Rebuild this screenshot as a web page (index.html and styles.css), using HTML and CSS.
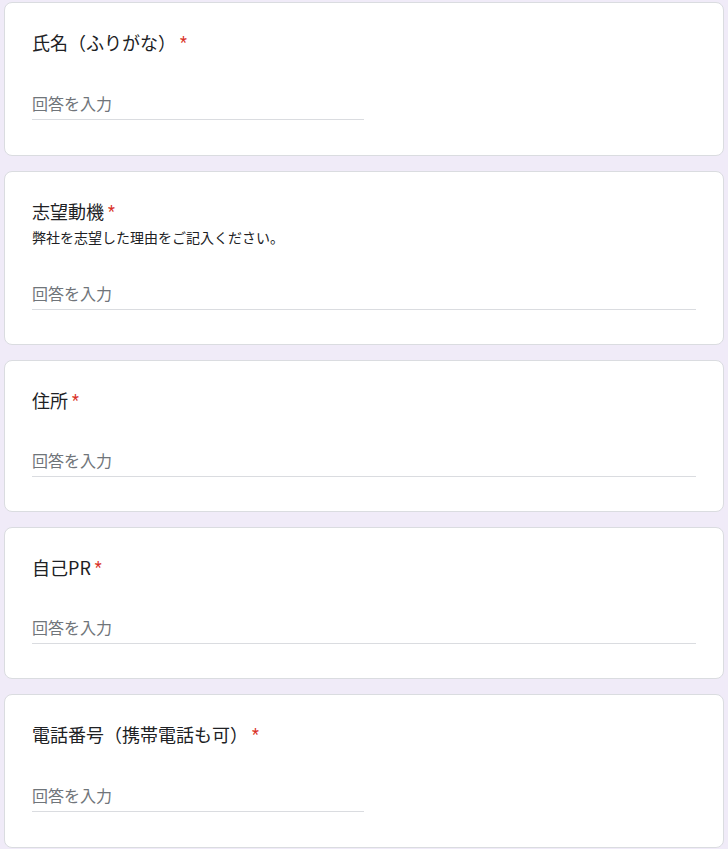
FILE: index.html
```html
<!DOCTYPE html>
<html lang="ja">
<head>
<meta charset="utf-8">
<title>フォーム</title>
<link rel="stylesheet" href="styles.css">
</head>
<body>
<main class="form">
  <section class="card">
    <div class="q-title q-title--paren">氏名（ふりがな） <span class="req">*</span></div>
    <div class="answer answer--short">回答を入力</div>
  </section>
  <section class="card">
    <div class="q-title">志望動機 <span class="req">*</span></div>
    <div class="q-desc">弊社を志望した理由をご記入ください。</div>
    <div class="answer answer--after-desc">回答を入力</div>
  </section>
  <section class="card">
    <div class="q-title">住所 <span class="req">*</span></div>
    <div class="answer">回答を入力</div>
  </section>
  <section class="card">
    <div class="q-title">自己PR <span class="req">*</span></div>
    <div class="answer">回答を入力</div>
  </section>
  <section class="card">
    <div class="q-title q-title--paren">電話番号（携帯電話も可） <span class="req">*</span></div>
    <div class="answer answer--short">回答を入力</div>
  </section>
</main>
</body>
</html>
```

FILE: styles.css
```css
html, body {
  margin: 0;
  padding: 0;
}
body {
  background: #f0ebf8;
  font-family: "Noto Sans CJK JP", sans-serif;
  color: #202124;
}
.form {
  display: flex;
  flex-direction: column;
  gap: 15px;
  padding: 2px 4px 0 4px;
  width: 720px;
}
.card {
  background: #fff;
  border: 1px solid #dadce0;
  border-radius: 8px;
  padding: 27px 27px 34px 27px;
  display: flex;
  flex-direction: column;
}
.q-title {
  font-size: 18px;
  line-height: 24px;
  color: #202124;
}
.q-title--paren {
  line-height: 25px;
}
.req {
  color: #d93025;
  font-family: Roboto, "Liberation Sans", sans-serif;
  font-size: 16px;
  line-height: 0;
  vertical-align: 2px;
}
.q-desc {
  font-size: 14px;
  line-height: 20px;
  margin-top: 4px;
  color: #202124;
}
.answer {
  margin-top: 36px;
  font-size: 16px;
  line-height: 24px;
  color: #70757a;
  padding-bottom: 4px;
  border-bottom: 1px solid #dadce0;
}
.answer--after-desc {
  margin-top: 34px;
}
.answer--short {
  width: 50%;
  margin-bottom: 1px;
}
```
